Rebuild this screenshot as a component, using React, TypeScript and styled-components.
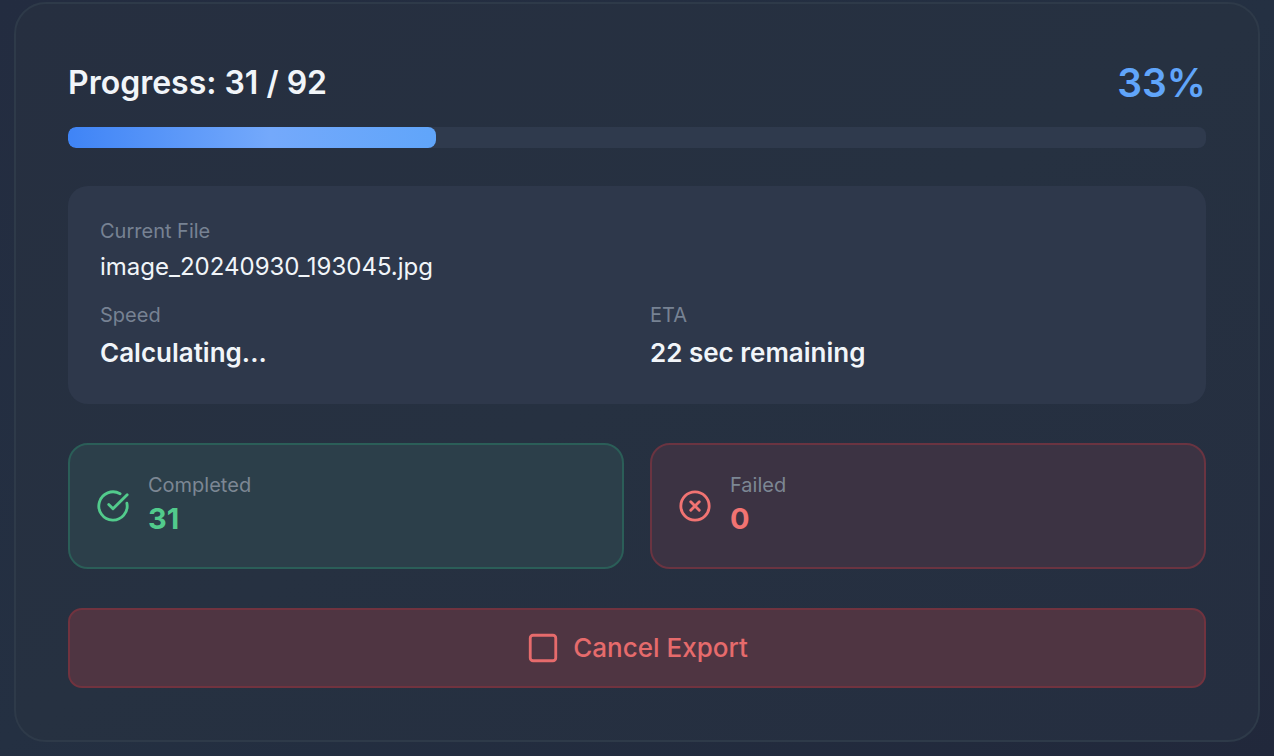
import React from 'react';
import styled, { createGlobalStyle } from 'styled-components';
import { CircleCheckBig, CircleX, Square } from 'lucide-react';

const Global = createGlobalStyle`
  * { box-sizing: border-box; }
  body {
    margin: 0;
    min-height: 100vh;
    background: linear-gradient(150deg, #232c40, #243042 50%, #21283b);
    font-family: Inter, "Liberation Sans", sans-serif;
  }
`;
const Page = styled.main`
  padding: 2px 14px 14px;
`;
const Panel = styled.section`
  border: 2px solid #2e3a49;
  border-radius: 32px;
  background: linear-gradient(150deg, #262f40, #263141 50%, #252e40);
  padding: 52px;
`;
const Header = styled.header`
  display: flex;
  justify-content: space-between;
  align-items: center;
  height: 54px;
  margin-bottom: 17px;
`;
const Title = styled.h1`
  margin: 0;
  font-size: 32px;
  line-height: 42px;
  font-weight: 600;
  color: #f1f5f9;
`;
const Percent = styled.span`
  font-size: 39px;
  line-height: 48px;
  font-weight: 600;
  color: #60a5fa;
`;
const Track = styled.div`
  height: 21px;
  border-radius: 8px;
  background: #2f3a4d;
  overflow: hidden;
  margin-bottom: 38px;
`;
const Fill = styled.div`
  height: 100%;
  border-radius: 8px;
  background: linear-gradient(90deg, #3f84f6, #74a9fb 55%, #60a5fa);
`;
const Details = styled.dl`
  margin: 0 0 39px;
  padding: 31px 32px;
  border-radius: 20px;
  background: #2e384b;
  display: grid;
  grid-template-columns: 1fr 1fr;
  column-gap: 26px;
  row-gap: 16px;
`;
const Item = styled.div<{ $wide?: boolean }>`
  grid-column: ${p => (p.$wide ? '1 / -1' : 'auto')};
`;
const Label = styled.dt`
  font-size: 20px;
  line-height: 28px;
  color: #778293;
`;
const Value = styled.dd<{ $small?: boolean }>`
  margin: 4px 0 0;
  font-size: ${p => (p.$small ? 24 : 26)}px;
  line-height: ${p => (p.$small ? 36 : 40)}px;
  font-weight: ${p => (p.$small ? 400 : 600)};
  color: ${p => (p.$small ? '#f1f5f9' : '#f1f5f9')};
`;
const Stats = styled.div`
  display: grid;
  grid-template-columns: 1fr 1fr;
  gap: 26px;
  margin-bottom: 39px;
`;
const Stat = styled.div<{ $tone: 'good' | 'bad' }>`
  display: flex;
  align-items: center;
  gap: 18px;
  padding: 26px;
  border-radius: 20px;
  border: 2px solid ${p => (p.$tone === 'good' ? '#2b5e58' : '#6a3441')};
  background: ${p => (p.$tone === 'good' ? '#2c3f4a' : '#3c3343')};
  color: ${p => (p.$tone === 'good' ? '#52cb8c' : '#f17372')};
`;
const StatLabel = styled.div`
  font-size: 20px;
  line-height: 28px;
  color: #7c8794;
`;
const StatValue = styled.div`
  padding-bottom: 2px;
  font-size: 29px;
  line-height: 40px;
  font-weight: 700;
`;
const Cancel = styled.button`
  width: 100%;
  padding: 20px;
  display: flex;
  align-items: center;
  justify-content: center;
  gap: 13px;
  border: 2px solid #71333f;
  border-radius: 14px;
  background: #4f3542;
  color: #e66b6c;
  font: 500 26px/36px Inter, "Liberation Sans", sans-serif;
`;

export default function App() {
  const done = 31;
  const total = 92;
  const fill = 32.3;
  return (
    <Page>
      <Global />
      <Panel>
        <Header>
          <Title>Progress: {done} / {total}</Title>
          <Percent>33%</Percent>
        </Header>
        <Track
          role="progressbar"
          aria-label="Export progress"
          aria-valuemin={0}
          aria-valuemax={100}
          aria-valuenow={33}
        >
          <Fill style={{ width: `${fill}%` }} />
        </Track>
        <Details>
          <Item $wide><Label>Current File</Label><Value $small>image_20240930_193045.jpg</Value></Item>
          <Item><Label>Speed</Label><Value>Calculating...</Value></Item>
          <Item><Label>ETA</Label><Value>22 sec remaining</Value></Item>
        </Details>
        <Stats>
          <Stat $tone="good">
            <CircleCheckBig size={34} />
            <div><StatLabel>Completed</StatLabel><StatValue>{done}</StatValue></div>
          </Stat>
          <Stat $tone="bad">
            <CircleX size={34} />
            <div><StatLabel>Failed</StatLabel><StatValue>0</StatValue></div>
          </Stat>
        </Stats>
        <Cancel type="button"><Square size={34} />Cancel Export</Cancel>
      </Panel>
    </Page>
  );
}
